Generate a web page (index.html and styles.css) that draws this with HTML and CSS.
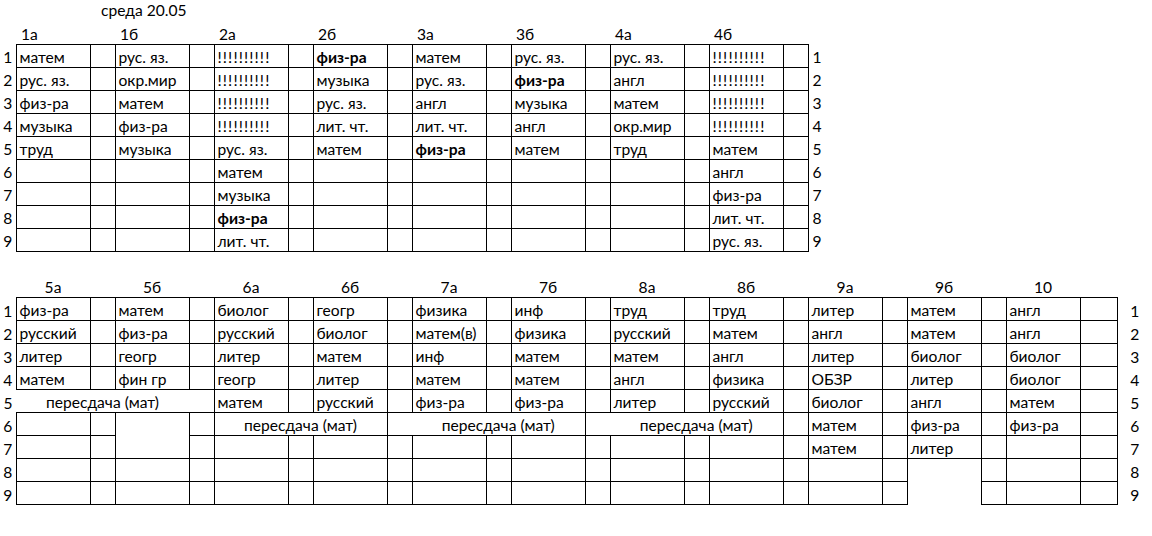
FILE: index.html
```html
<!DOCTYPE html>
<html lang="ru">
<head>
<meta charset="utf-8">
<title>среда 20.05</title>
<link rel="stylesheet" href="styles.css">
</head>
<body>
<div class="title">среда 20.05</div>
<table class="sheet top">
  <colgroup>
    <col class="wn">
    <col class="wm"><col class="ws"><col class="wm"><col class="ws"><col class="wm"><col class="ws"><col class="wm"><col class="ws">
    <col class="wm"><col class="ws"><col class="wm"><col class="ws"><col class="wm"><col class="ws"><col class="wm"><col class="ws">
    <col class="wr">
  </colgroup>
  <tr class="head">
    <td></td>
    <td>1а</td><td></td><td>1б</td><td></td><td>2а</td><td></td><td>2б</td><td></td>
    <td>3а</td><td></td><td>3б</td><td></td><td>4а</td><td></td><td>4б</td><td></td>
    <td></td>
  </tr>
  <tr>
    <td class="n">1</td>
    <td class="c">матем</td><td class="c"></td><td class="c">рус. яз.</td><td class="c"></td><td class="c x">!!!!!!!!!!</td><td class="c"></td><td class="c b">физ-ра</td><td class="c"></td>
    <td class="c">матем</td><td class="c"></td><td class="c">рус. яз.</td><td class="c"></td><td class="c">рус. яз.</td><td class="c"></td><td class="c x">!!!!!!!!!!</td><td class="c"></td>
    <td class="rn">1</td>
  </tr>
  <tr>
    <td class="n">2</td>
    <td class="c">рус. яз.</td><td class="c"></td><td class="c">окр.мир</td><td class="c"></td><td class="c x">!!!!!!!!!!</td><td class="c"></td><td class="c">музыка</td><td class="c"></td>
    <td class="c">рус. яз.</td><td class="c"></td><td class="c b">физ-ра</td><td class="c"></td><td class="c">англ</td><td class="c"></td><td class="c x">!!!!!!!!!!</td><td class="c"></td>
    <td class="rn">2</td>
  </tr>
  <tr>
    <td class="n">3</td>
    <td class="c">физ-ра</td><td class="c"></td><td class="c">матем</td><td class="c"></td><td class="c x">!!!!!!!!!!</td><td class="c"></td><td class="c">рус. яз.</td><td class="c"></td>
    <td class="c">англ</td><td class="c"></td><td class="c">музыка</td><td class="c"></td><td class="c">матем</td><td class="c"></td><td class="c x">!!!!!!!!!!</td><td class="c"></td>
    <td class="rn">3</td>
  </tr>
  <tr>
    <td class="n">4</td>
    <td class="c">музыка</td><td class="c"></td><td class="c">физ-ра</td><td class="c"></td><td class="c x">!!!!!!!!!!</td><td class="c"></td><td class="c">лит. чт.</td><td class="c"></td>
    <td class="c">лит. чт.</td><td class="c"></td><td class="c">англ</td><td class="c"></td><td class="c">окр.мир</td><td class="c"></td><td class="c x">!!!!!!!!!!</td><td class="c"></td>
    <td class="rn">4</td>
  </tr>
  <tr>
    <td class="n">5</td>
    <td class="c">труд</td><td class="c"></td><td class="c">музыка</td><td class="c"></td><td class="c">рус. яз.</td><td class="c"></td><td class="c">матем</td><td class="c"></td>
    <td class="c b">физ-ра</td><td class="c"></td><td class="c">матем</td><td class="c"></td><td class="c">труд</td><td class="c"></td><td class="c">матем</td><td class="c"></td>
    <td class="rn">5</td>
  </tr>
  <tr>
    <td class="n">6</td>
    <td class="c"></td><td class="c"></td><td class="c"></td><td class="c"></td><td class="c">матем</td><td class="c"></td><td class="c"></td><td class="c"></td>
    <td class="c"></td><td class="c"></td><td class="c"></td><td class="c"></td><td class="c"></td><td class="c"></td><td class="c">англ</td><td class="c"></td>
    <td class="rn">6</td>
  </tr>
  <tr>
    <td class="n">7</td>
    <td class="c"></td><td class="c"></td><td class="c"></td><td class="c"></td><td class="c">музыка</td><td class="c"></td><td class="c"></td><td class="c"></td>
    <td class="c"></td><td class="c"></td><td class="c"></td><td class="c"></td><td class="c"></td><td class="c"></td><td class="c">физ-ра</td><td class="c"></td>
    <td class="rn">7</td>
  </tr>
  <tr>
    <td class="n">8</td>
    <td class="c"></td><td class="c"></td><td class="c"></td><td class="c"></td><td class="c b">физ-ра</td><td class="c"></td><td class="c"></td><td class="c"></td>
    <td class="c"></td><td class="c"></td><td class="c"></td><td class="c"></td><td class="c"></td><td class="c"></td><td class="c">лит. чт.</td><td class="c"></td>
    <td class="rn">8</td>
  </tr>
  <tr>
    <td class="n">9</td>
    <td class="c"></td><td class="c"></td><td class="c"></td><td class="c"></td><td class="c">лит. чт.</td><td class="c"></td><td class="c"></td><td class="c"></td>
    <td class="c"></td><td class="c"></td><td class="c"></td><td class="c"></td><td class="c"></td><td class="c"></td><td class="c">рус. яз.</td><td class="c"></td>
    <td class="rn">9</td>
  </tr>
</table>

<table class="sheet bottom">
  <colgroup>
    <col class="wn">
    <col class="wm"><col class="ws"><col class="wm"><col class="ws"><col class="wm"><col class="ws"><col class="wm"><col class="ws">
    <col class="wm"><col class="ws"><col class="wm"><col class="ws"><col class="wm"><col class="ws"><col class="wm"><col class="ws">
    <col class="wm"><col class="ws"><col class="wm"><col class="ws"><col class="wm"><col class="wl">
    <col class="wr2">
  </colgroup>
  <tr class="head center">
    <td></td>
    <td>5а</td><td></td><td>5б</td><td></td><td>6а</td><td></td><td>6б</td><td></td>
    <td>7а</td><td></td><td>7б</td><td></td><td>8а</td><td></td><td>8б</td><td></td>
    <td>9а</td><td></td><td>9б</td><td></td><td>10</td><td></td>
    <td></td>
  </tr>
  <tr>
    <td class="n">1</td>
    <td class="c">физ-ра</td><td class="c"></td><td class="c">матем</td><td class="c"></td><td class="c">биолог</td><td class="c"></td><td class="c">геогр</td><td class="c"></td>
    <td class="c">физика</td><td class="c"></td><td class="c">инф</td><td class="c"></td><td class="c">труд</td><td class="c"></td><td class="c">труд</td><td class="c"></td>
    <td class="c">литер</td><td class="c"></td><td class="c">матем</td><td class="c"></td><td class="c">англ</td><td class="c"></td>
    <td class="rn2">1</td>
  </tr>
  <tr>
    <td class="n">2</td>
    <td class="c">русский</td><td class="c"></td><td class="c">физ-ра</td><td class="c"></td><td class="c">русский</td><td class="c"></td><td class="c">биолог</td><td class="c"></td>
    <td class="c">матем(в)</td><td class="c"></td><td class="c">физика</td><td class="c"></td><td class="c">русский</td><td class="c"></td><td class="c">матем</td><td class="c"></td>
    <td class="c">англ</td><td class="c"></td><td class="c">матем</td><td class="c"></td><td class="c">англ</td><td class="c"></td>
    <td class="rn2">2</td>
  </tr>
  <tr>
    <td class="n">3</td>
    <td class="c">литер</td><td class="c"></td><td class="c">геогр</td><td class="c"></td><td class="c">литер</td><td class="c"></td><td class="c">матем</td><td class="c"></td>
    <td class="c">инф</td><td class="c"></td><td class="c">матем</td><td class="c"></td><td class="c">матем</td><td class="c"></td><td class="c">англ</td><td class="c"></td>
    <td class="c">литер</td><td class="c"></td><td class="c">биолог</td><td class="c"></td><td class="c">биолог</td><td class="c"></td>
    <td class="rn2">3</td>
  </tr>
  <tr>
    <td class="n">4</td>
    <td class="c">матем</td><td class="c"></td><td class="c">фин гр</td><td class="c"></td><td class="c">геогр</td><td class="c"></td><td class="c">литер</td><td class="c"></td>
    <td class="c">матем</td><td class="c"></td><td class="c">матем</td><td class="c"></td><td class="c">англ</td><td class="c"></td><td class="c">физика</td><td class="c"></td>
    <td class="c">ОБЗР</td><td class="c"></td><td class="c">литер</td><td class="c"></td><td class="c">биолог</td><td class="c"></td>
    <td class="rn2">4</td>
  </tr>
  <tr>
    <td class="n">5</td>
    <td class="c mg nl nr" colspan="3">пересдача (мат)</td><td class="c nl"></td><td class="c">матем</td><td class="c"></td><td class="c">русский</td><td class="c"></td>
    <td class="c">физ-ра</td><td class="c"></td><td class="c">физ-ра</td><td class="c"></td><td class="c">литер</td><td class="c"></td><td class="c">русский</td><td class="c"></td>
    <td class="c">биолог</td><td class="c"></td><td class="c">англ</td><td class="c"></td><td class="c">матем</td><td class="c"></td>
    <td class="rn2">5</td>
  </tr>
  <tr>
    <td class="n">6</td>
    <td class="c"></td><td class="c"></td><td class="c" rowspan="2"></td><td class="c"></td><td class="c mg" colspan="3">пересдача (мат)</td><td class="c nr"></td>
    <td class="c mg nl" colspan="3">пересдача (мат)</td><td class="c nr"></td><td class="c mg nl" colspan="3">пересдача (мат)</td><td class="c"></td>
    <td class="c">матем</td><td class="c"></td><td class="c">физ-ра</td><td class="c"></td><td class="c">физ-ра</td><td class="c"></td>
    <td class="rn2">6</td>
  </tr>
  <tr>
    <td class="n">7</td>
    <td class="c"></td><td class="c"></td><td class="c"></td><td class="c"></td><td class="c"></td><td class="c"></td><td class="c"></td>
    <td class="c"></td><td class="c"></td><td class="c"></td><td class="c"></td><td class="c"></td><td class="c"></td><td class="c"></td><td class="c"></td>
    <td class="c">матем</td><td class="c"></td><td class="c">литер</td><td class="c"></td><td class="c"></td><td class="c"></td>
    <td class="rn2">7</td>
  </tr>
  <tr>
    <td class="n">8</td>
    <td class="c"></td><td class="c"></td><td class="c"></td><td class="c"></td><td class="c"></td><td class="c"></td><td class="c"></td><td class="c"></td>
    <td class="c"></td><td class="c"></td><td class="c"></td><td class="c"></td><td class="c"></td><td class="c"></td><td class="c"></td><td class="c"></td>
    <td class="c"></td><td class="c"></td><td class="c nb" rowspan="2"></td><td class="c"></td><td class="c"></td><td class="c"></td>
    <td class="rn2">8</td>
  </tr>
  <tr>
    <td class="n">9</td>
    <td class="c"></td><td class="c"></td><td class="c"></td><td class="c"></td><td class="c"></td><td class="c"></td><td class="c"></td><td class="c"></td>
    <td class="c"></td><td class="c"></td><td class="c"></td><td class="c"></td><td class="c"></td><td class="c"></td><td class="c"></td><td class="c"></td>
    <td class="c"></td><td class="c"></td><td class="c"></td><td class="c"></td><td class="c"></td>
    <td class="rn2">9</td>
  </tr>
</table>
</body>
</html>
```

FILE: styles.css
```css
html, body {
  margin: 0;
  padding: 0;
  background: #ffffff;
}

body {
  font-family: Lato, "Open Sans", "DejaVu Sans", sans-serif;
  font-size: 15.6px;
  color: #000000;
}

.title {
  height: 21px;
  box-sizing: border-box;
  padding: 1px 0 0 101px;
  line-height: 18px;
  white-space: nowrap;
}

.sheet {
  border-collapse: collapse;
  table-layout: fixed;
}

.sheet.bottom {
  margin-top: 23px;
}

.wn { width: 16px; }
.wm { width: 74px; }
.ws { width: 25px; }
.wl { width: 37px; }
.wr { width: 30px; }
.wr2 { width: 35px; }

.sheet tr {
  height: 23px;
}

.sheet td {
  padding: 0 3px 1px 3px;
  line-height: 18px;
  vertical-align: bottom;
  white-space: nowrap;
  overflow: visible;
}

.sheet td.c {
  border: 1px solid #000000;
}

.head td {
  padding-left: 5px;
}

.head.center td {
  text-align: center;
  padding-left: 0;
  padding-right: 0;
}

.n {
  text-align: center;
  padding-left: 0 !important;
  padding-right: 0 !important;
}

.rn {
  padding-left: 4px !important;
}

.rn2 {
  text-align: center;
  padding-left: 0 !important;
  padding-right: 0 !important;
}

.b {
  font-weight: 700;
}

.x {
  letter-spacing: 1.1px;
}

.mg {
  text-align: center;
}

.sheet td.nl {
  border-left-style: hidden;
}

.sheet td.nr {
  border-right-style: hidden;
}

.sheet td.nb {
  border-bottom-style: hidden;
}
```
